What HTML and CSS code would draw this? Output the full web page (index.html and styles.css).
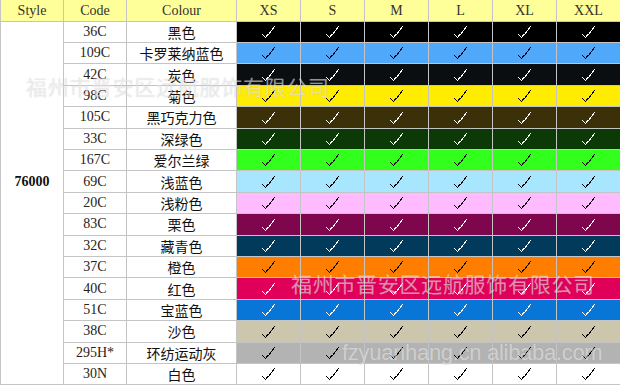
FILE: index.html
```html
<!DOCTYPE html>
<html lang="zh">
<head>
<meta charset="utf-8">
<title>76000 Colours</title>
<link rel="stylesheet" href="styles.css">
</head>
<body>
<svg class="defs" width="0" height="0" aria-hidden="true">
  <symbol id="tick" viewBox="0 0 13 12">
    <polyline points="0.5,8.5 3.5,11.5 5.5,9 6.5,8.5 12.5,0.5" fill="none" stroke="currentColor" stroke-width="1"/>
  </symbol>
</svg>
<div class="sheet">
<table class="grid">
  <colgroup>
    <col class="w-style"><col class="w-code"><col class="w-colour">
    <col class="w-size"><col class="w-size"><col class="w-size"><col class="w-size"><col class="w-size"><col class="w-size">
  </colgroup>
  <thead>
    <tr class="head">
      <th>Style</th><th>Code</th><th>Colour</th><th>XS</th><th>S</th><th>M</th><th>L</th><th>XL</th><th>XXL</th>
    </tr>
  </thead>
  <tbody>
    <tr class="c-black light-tick"><td class="style" rowspan="17">76000</td><td class="code">36C</td><td class="name">黑色</td><td class="sz"><svg class="tk"><use href="#tick"/></svg></td><td class="sz"><svg class="tk"><use href="#tick"/></svg></td><td class="sz"><svg class="tk"><use href="#tick"/></svg></td><td class="sz"><svg class="tk"><use href="#tick"/></svg></td><td class="sz"><svg class="tk"><use href="#tick"/></svg></td><td class="sz"><svg class="tk"><use href="#tick"/></svg></td></tr>
    <tr class="c-carolina"><td class="code">109C</td><td class="name">卡罗莱纳蓝色</td><td class="sz"><svg class="tk"><use href="#tick"/></svg></td><td class="sz"><svg class="tk"><use href="#tick"/></svg></td><td class="sz"><svg class="tk"><use href="#tick"/></svg></td><td class="sz"><svg class="tk"><use href="#tick"/></svg></td><td class="sz"><svg class="tk"><use href="#tick"/></svg></td><td class="sz"><svg class="tk"><use href="#tick"/></svg></td></tr>
    <tr class="c-charcoal light-tick"><td class="code">42C</td><td class="name">炭色</td><td class="sz"><svg class="tk"><use href="#tick"/></svg></td><td class="sz"><svg class="tk"><use href="#tick"/></svg></td><td class="sz"><svg class="tk"><use href="#tick"/></svg></td><td class="sz"><svg class="tk"><use href="#tick"/></svg></td><td class="sz"><svg class="tk"><use href="#tick"/></svg></td><td class="sz"><svg class="tk"><use href="#tick"/></svg></td></tr>
    <tr class="c-daisy"><td class="code">98C</td><td class="name">菊色</td><td class="sz"><svg class="tk"><use href="#tick"/></svg></td><td class="sz"><svg class="tk"><use href="#tick"/></svg></td><td class="sz"><svg class="tk"><use href="#tick"/></svg></td><td class="sz"><svg class="tk"><use href="#tick"/></svg></td><td class="sz"><svg class="tk"><use href="#tick"/></svg></td><td class="sz"><svg class="tk"><use href="#tick"/></svg></td></tr>
    <tr class="c-choc light-tick"><td class="code">105C</td><td class="name">黑巧克力色</td><td class="sz"><svg class="tk"><use href="#tick"/></svg></td><td class="sz"><svg class="tk"><use href="#tick"/></svg></td><td class="sz"><svg class="tk"><use href="#tick"/></svg></td><td class="sz"><svg class="tk"><use href="#tick"/></svg></td><td class="sz"><svg class="tk"><use href="#tick"/></svg></td><td class="sz"><svg class="tk"><use href="#tick"/></svg></td></tr>
    <tr class="c-forest light-tick"><td class="code">33C</td><td class="name">深绿色</td><td class="sz"><svg class="tk"><use href="#tick"/></svg></td><td class="sz"><svg class="tk"><use href="#tick"/></svg></td><td class="sz"><svg class="tk"><use href="#tick"/></svg></td><td class="sz"><svg class="tk"><use href="#tick"/></svg></td><td class="sz"><svg class="tk"><use href="#tick"/></svg></td><td class="sz"><svg class="tk"><use href="#tick"/></svg></td></tr>
    <tr class="c-irish"><td class="code">167C</td><td class="name">爱尔兰绿</td><td class="sz"><svg class="tk"><use href="#tick"/></svg></td><td class="sz"><svg class="tk"><use href="#tick"/></svg></td><td class="sz"><svg class="tk"><use href="#tick"/></svg></td><td class="sz"><svg class="tk"><use href="#tick"/></svg></td><td class="sz"><svg class="tk"><use href="#tick"/></svg></td><td class="sz"><svg class="tk"><use href="#tick"/></svg></td></tr>
    <tr class="c-lightblue"><td class="code">69C</td><td class="name">浅蓝色</td><td class="sz"><svg class="tk"><use href="#tick"/></svg></td><td class="sz"><svg class="tk"><use href="#tick"/></svg></td><td class="sz"><svg class="tk"><use href="#tick"/></svg></td><td class="sz"><svg class="tk"><use href="#tick"/></svg></td><td class="sz"><svg class="tk"><use href="#tick"/></svg></td><td class="sz"><svg class="tk"><use href="#tick"/></svg></td></tr>
    <tr class="c-pink"><td class="code">20C</td><td class="name">浅粉色</td><td class="sz"><svg class="tk"><use href="#tick"/></svg></td><td class="sz"><svg class="tk"><use href="#tick"/></svg></td><td class="sz"><svg class="tk"><use href="#tick"/></svg></td><td class="sz"><svg class="tk"><use href="#tick"/></svg></td><td class="sz"><svg class="tk"><use href="#tick"/></svg></td><td class="sz"><svg class="tk"><use href="#tick"/></svg></td></tr>
    <tr class="c-maroon light-tick"><td class="code">83C</td><td class="name">栗色</td><td class="sz"><svg class="tk"><use href="#tick"/></svg></td><td class="sz"><svg class="tk"><use href="#tick"/></svg></td><td class="sz"><svg class="tk"><use href="#tick"/></svg></td><td class="sz"><svg class="tk"><use href="#tick"/></svg></td><td class="sz"><svg class="tk"><use href="#tick"/></svg></td><td class="sz"><svg class="tk"><use href="#tick"/></svg></td></tr>
    <tr class="c-navy light-tick"><td class="code">32C</td><td class="name">藏青色</td><td class="sz"><svg class="tk"><use href="#tick"/></svg></td><td class="sz"><svg class="tk"><use href="#tick"/></svg></td><td class="sz"><svg class="tk"><use href="#tick"/></svg></td><td class="sz"><svg class="tk"><use href="#tick"/></svg></td><td class="sz"><svg class="tk"><use href="#tick"/></svg></td><td class="sz"><svg class="tk"><use href="#tick"/></svg></td></tr>
    <tr class="c-orange"><td class="code">37C</td><td class="name">橙色</td><td class="sz"><svg class="tk"><use href="#tick"/></svg></td><td class="sz"><svg class="tk"><use href="#tick"/></svg></td><td class="sz"><svg class="tk"><use href="#tick"/></svg></td><td class="sz"><svg class="tk"><use href="#tick"/></svg></td><td class="sz"><svg class="tk"><use href="#tick"/></svg></td><td class="sz"><svg class="tk"><use href="#tick"/></svg></td></tr>
    <tr class="c-red light-tick"><td class="code">40C</td><td class="name">红色</td><td class="sz"><svg class="tk"><use href="#tick"/></svg></td><td class="sz"><svg class="tk"><use href="#tick"/></svg></td><td class="sz"><svg class="tk"><use href="#tick"/></svg></td><td class="sz"><svg class="tk"><use href="#tick"/></svg></td><td class="sz"><svg class="tk"><use href="#tick"/></svg></td><td class="sz"><svg class="tk"><use href="#tick"/></svg></td></tr>
    <tr class="c-royal light-tick"><td class="code">51C</td><td class="name">宝蓝色</td><td class="sz"><svg class="tk"><use href="#tick"/></svg></td><td class="sz"><svg class="tk"><use href="#tick"/></svg></td><td class="sz"><svg class="tk"><use href="#tick"/></svg></td><td class="sz"><svg class="tk"><use href="#tick"/></svg></td><td class="sz"><svg class="tk"><use href="#tick"/></svg></td><td class="sz"><svg class="tk"><use href="#tick"/></svg></td></tr>
    <tr class="c-sand"><td class="code">38C</td><td class="name">沙色</td><td class="sz"><svg class="tk"><use href="#tick"/></svg></td><td class="sz"><svg class="tk"><use href="#tick"/></svg></td><td class="sz"><svg class="tk"><use href="#tick"/></svg></td><td class="sz"><svg class="tk"><use href="#tick"/></svg></td><td class="sz"><svg class="tk"><use href="#tick"/></svg></td><td class="sz"><svg class="tk"><use href="#tick"/></svg></td></tr>
    <tr class="c-grey"><td class="code">295H*</td><td class="name">环纺运动灰</td><td class="sz"><svg class="tk"><use href="#tick"/></svg></td><td class="sz"><svg class="tk"><use href="#tick"/></svg></td><td class="sz"><svg class="tk"><use href="#tick"/></svg></td><td class="sz"><svg class="tk"><use href="#tick"/></svg></td><td class="sz"><svg class="tk"><use href="#tick"/></svg></td><td class="sz"><svg class="tk"><use href="#tick"/></svg></td></tr>
    <tr class="c-white"><td class="code">30N</td><td class="name">白色</td><td class="sz"><svg class="tk"><use href="#tick"/></svg></td><td class="sz"><svg class="tk"><use href="#tick"/></svg></td><td class="sz"><svg class="tk"><use href="#tick"/></svg></td><td class="sz"><svg class="tk"><use href="#tick"/></svg></td><td class="sz"><svg class="tk"><use href="#tick"/></svg></td><td class="sz"><svg class="tk"><use href="#tick"/></svg></td></tr>
  </tbody>
</table>
<div class="wm wm-top">福州市晋安区远航服饰有限公司</div>
<div class="wm wm-mid">福州市晋安区远航服饰有限公司</div>
<div class="wm wm-url">fzyuanhang.cn alibaba.com</div>
</div>
</body>
</html>
```

FILE: styles.css
```css
html, body {
  margin: 0;
  padding: 0;
  background: #ffffff;
}

.defs {
  position: absolute;
  width: 0;
  height: 0;
  overflow: hidden;
}

.sheet {
  position: relative;
  width: 620px;
  height: 387px;
  overflow: hidden;
}

.grid {
  border-collapse: collapse;
  table-layout: fixed;
  width: 621px;
  font-family: "Liberation Serif", "Times New Roman", serif;
  font-size: 14px;
  color: #222;
}

.w-style { width: 63px; }
.w-code { width: 63px; }
.w-colour { width: 110px; }
.w-size { width: 64px; }

.grid th,
.grid td {
  border: 1px solid #c4c4c4;
  padding: 0;
  text-align: center;
  vertical-align: middle;
  overflow: hidden;
  white-space: nowrap;
}

.head th {
  height: 21px;
  border-top: none;
  background: #ffff99;
  font-weight: normal;
  color: #33332a;
  line-height: 16px;
  padding-top: 1px;
  box-sizing: border-box;
}

.grid tbody tr {
  height: 21.41px;
}

.grid td {
  line-height: 16px;
}

.style {
  background: #ffffff;
  font-weight: bold;
  color: #111;
  padding-bottom: 42px !important;
}

.code {
  background: #ffffff;
  color: #2a2218;
}

.name {
  background: #ffffff;
  font-family: "Noto Sans CJK SC", "Noto Sans", sans-serif;
  font-size: 14px;
  color: #111;
  line-height: 16px;
}

.sz {
  line-height: 0;
  color: #000;
}

.light-tick .sz {
  color: #ffffff;
}

.tk {
  width: 13px;
  height: 12px;
  display: inline-block;
  vertical-align: middle;
  shape-rendering: crispEdges;
  margin-top: -1px;
}

.c-black .sz { background: #000000; }
.c-carolina .sz { background: #50a8fa; }
.c-charcoal .sz { background: #0a0e10; }
.c-daisy .sz { background: #ffec00; }
.c-choc .sz { background: #3c3008; }
.c-forest .sz { background: #0b3a06; }
.c-irish .sz { background: #33ff1c; }
.c-lightblue .sz { background: #a8e6ff; }
.c-pink .sz { background: #ffbbff; }
.c-maroon .sz { background: #7e064c; }
.c-navy .sz { background: #023a5c; }
.c-orange .sz { background: #ff7e00; }
.c-red .sz { background: #e0005a; }
.c-royal .sz { background: #0876d6; }
.c-sand .sz { background: #ccc6ad; }
.c-grey .sz { background: #b3b3b3; }
.c-white .sz { background: #ffffff; }

.wm {
  position: absolute;
  white-space: nowrap;
  pointer-events: none;
  color: rgba(255, 255, 255, 0.5);
  text-shadow: 0 0 1px rgba(110, 110, 110, 0.3);
  font-family: "Noto Sans CJK SC", "Noto Sans", sans-serif;
  font-size: 21px;
  letter-spacing: 0.7px;
  line-height: 24px;
}

.wm-top {
  left: 26px;
  top: 74px;
}

.wm-mid {
  left: 291px;
  top: 271px;
}

.wm-url {
  left: 342px;
  top: 340px;
  font-family: "Liberation Sans", Arial, sans-serif;
  font-size: 22px;
  letter-spacing: -0.3px;
  line-height: 26px;
}
```
